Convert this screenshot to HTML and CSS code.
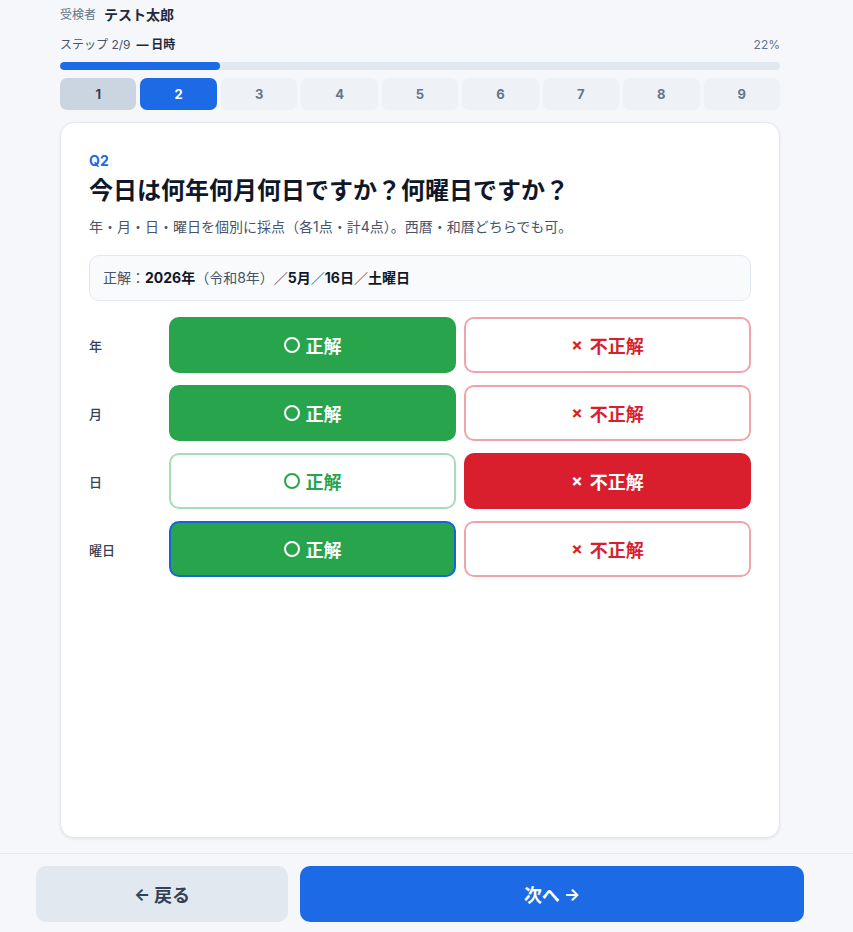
FILE: index.html
```html
<!DOCTYPE html>
<html lang="ja">
<head>
<meta charset="utf-8">
<link rel="stylesheet" href="styles.css">
</head>
<body>
<div class="page">
  <main class="main">
    <div class="examinee"><span class="ex-label">受検者</span><span class="ex-name">テスト太郎</span></div>
    <div class="step-info">
      <div><span class="step-count">ステップ 2/9</span><span class="step-title">— 日時</span></div>
      <div class="pct">22%</div>
    </div>
    <div class="progress"><div class="progress-fill" style="width:22.22%"></div></div>
    <div class="steps">
      <div class="step done">1</div>
      <div class="step current">2</div>
      <div class="step">3</div>
      <div class="step">4</div>
      <div class="step">5</div>
      <div class="step">6</div>
      <div class="step">7</div>
      <div class="step">8</div>
      <div class="step">9</div>
    </div>
    <section class="card">
      <div class="qnum">Q2</div>
      <h1 class="qtitle">今日は何年何月何日ですか？何曜日ですか？</h1>
      <p class="qdesc">年・月・日・曜日を個別に採点（各1点・計4点）。西暦・和暦どちらでも可。</p>
      <div class="answer">正解：<b>2026年</b>（令和8年）／<b>5月</b>／<b>16日</b>／<b>土曜日</b></div>
      <div class="rows">
        <div class="row">
          <div class="row-label">年</div>
          <button class="btn ok sel"><span class="circ"></span>正解</button>
          <button class="btn ng"><span class="x">×</span>不正解</button>
        </div>
        <div class="row">
          <div class="row-label">月</div>
          <button class="btn ok sel"><span class="circ"></span>正解</button>
          <button class="btn ng"><span class="x">×</span>不正解</button>
        </div>
        <div class="row">
          <div class="row-label">日</div>
          <button class="btn ok"><span class="circ"></span>正解</button>
          <button class="btn ng sel"><span class="x">×</span>不正解</button>
        </div>
        <div class="row">
          <div class="row-label">曜日</div>
          <button class="btn ok sel focus"><span class="circ"></span>正解</button>
          <button class="btn ng"><span class="x">×</span>不正解</button>
        </div>
      </div>
    </section>
  </main>
  <footer class="footer">
    <div class="footer-inner">
      <button class="nav back"><span class="arrow">←</span>戻る</button>
      <button class="nav next">次へ<span class="arrow r">→</span></button>
    </div>
  </footer>
</div>
</body>
</html>
```

FILE: styles.css
```css
* { box-sizing: border-box; }
html, body { margin: 0; padding: 0; }
body {
  background: #f5f7fa;
  font-family: Inter, "Noto Sans CJK JP", sans-serif;
  color: #0f172a;
}
.page {
  width: 853px;
  height: 932px;
  display: flex;
  flex-direction: column;
  overflow: hidden;
}
.main {
  flex: 1 1 0;
  width: 720px;
  margin-left: 60px;
  padding-top: 6px;
  display: flex;
  flex-direction: column;
  min-height: 0;
}
.examinee {
  height: 18px;
  line-height: 18px;
  display: flex;
  align-items: center;
  gap: 8px;
}
.ex-label { font-size: 12px; color: #64748b; }
.ex-name { font-size: 14px; font-weight: 700; color: #1e293b; }
.step-info {
  margin-top: 12px;
  height: 18px;
  line-height: 18px;
  display: flex;
  justify-content: space-between;
  font-size: 12px;
}
.step-count { color: #475569; }
.step-title { color: #1e293b; font-weight: 700; margin-left: 6px; }
.pct { color: #64748b; }
.progress {
  margin-top: 8px;
  height: 8px;
  border-radius: 4px;
  background: #e2e8f0;
  overflow: hidden;
}
.progress-fill { height: 100%; background: #1d6ae6; border-radius: 4px; }
.steps {
  margin-top: 8px;
  display: grid;
  grid-template-columns: repeat(9, 1fr);
  gap: 4px;
}
.step {
  height: 32px;
  border-radius: 7px;
  background: #eef2f7;
  color: #64748b;
  font-size: 13px;
  font-weight: 700;
  display: flex;
  align-items: center;
  justify-content: center;
}
.step.done { background: #cbd5e1; color: #334155; }
.step.current { background: #1d6ae6; color: #fff; }
.card {
  margin-top: 12px;
  margin-bottom: 15px;
  flex: 1 1 0;
  min-height: 0;
  background: #fff;
  border: 1px solid #e2e8f0;
  border-radius: 14px;
  box-shadow: 0 1px 3px rgba(15, 23, 42, 0.08);
  padding: 28px 28px;
}
.qnum {
  font-size: 14px;
  line-height: 20px;
  font-weight: 700;
  color: #1d6ae6;
}
.qtitle {
  margin: 4px 0 0;
  font-size: 24px;
  line-height: 32px;
  font-weight: 700;
  color: #0f172a;
}
.qdesc {
  margin: 10px 0 0;
  font-size: 14px;
  line-height: 20px;
  color: #475569;
}
.answer {
  margin-top: 18px;
  padding: 12px 13px;
  line-height: 20px;
  font-size: 14px;
  color: #475569;
  background: #f8fafc;
  border: 1px solid #e2e8f0;
  border-radius: 10px;
}
.answer b { color: #0f172a; font-weight: 700; }
.rows {
  margin-top: 16px;
  display: flex;
  flex-direction: column;
  gap: 12px;
}
.row {
  display: grid;
  grid-template-columns: 72px 1fr 1fr;
  column-gap: 8px;
  align-items: center;
}
.row-label {
  font-size: 13px;
  font-weight: 500;
  color: #334155;
}
.btn {
  height: 56px;
  border-radius: 10px;
  font-family: inherit;
  font-size: 18px;
  font-weight: 700;
  display: flex;
  align-items: center;
  justify-content: center;
  gap: 6px;
  background: #fff;
  border: 2px solid;
  padding: 0;
}
.btn.ok { border-color: #a9dbb6; color: #28a44c; }
.btn.ok.sel { background: #28a44c; border-color: #28a44c; color: #fff; }
.btn.ok.sel.focus { border-color: #1565d8; }
.btn.ng { border-color: #f0a4a9; color: #d91e2e; }
.btn.ng.sel { background: #d91e2e; border-color: #d91e2e; color: #fff; }
.circ {
  width: 16px;
  height: 16px;
  border-radius: 50%;
  border: 2.2px solid currentColor;
}
.x { font-size: 17px; font-weight: 700; margin-right: 1px; }
.footer {
  flex: 0 0 79px;
  border-top: 1px solid #e2e8f0;
  background: #f5f7fa;
  padding-top: 12px;
}
.footer-inner {
  width: 768px;
  margin-left: 36px;
  display: grid;
  grid-template-columns: 252px 1fr;
  gap: 12px;
}
.nav {
  height: 56px;
  border: none;
  border-radius: 10px;
  font-family: inherit;
  font-size: 18px;
  font-weight: 700;
  display: flex;
  align-items: center;
  justify-content: center;
  gap: 4px;
}
.nav.back { background: #e2e8f0; color: #334155; }
.nav.next { background: #1d6ae6; color: #fff; }
.arrow { font-size: 17px; }
```
